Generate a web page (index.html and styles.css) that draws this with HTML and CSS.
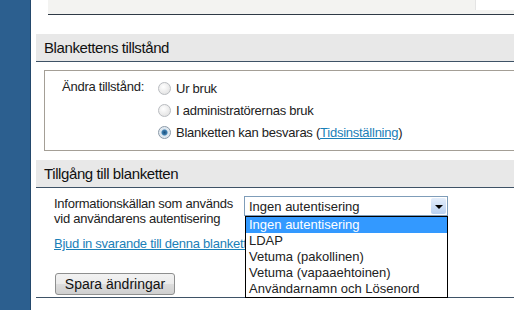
FILE: index.html
```html
<!DOCTYPE html>
<html lang="sv">
<head>
  <meta charset="UTF-8" />
  <title>Blankettens inställningar</title>
  <link rel="stylesheet" href="styles.css">
</head>
<body>
  <div class="sidebar"></div>
  <div class="main">
    <div class="top-box">
      <span class="top-input"></span>
      <span class="top-button"></span>
    </div>

    <div class="section-head">Blankettens tillstånd</div>
    <div class="state-box">
      <div class="state-label">Ändra tillstånd:</div>
      <div class="state-options">
        <label><input type="radio" name="state" /> Ur bruk</label>
        <label><input type="radio" name="state" /> I administratörernas bruk</label>
        <label><input type="radio" name="state" checked /> Blanketten kan besvaras (<a href="#">Tidsinställning</a>)</label>
      </div>
    </div>

    <div class="section-head section-head-tight">Tillgång till blanketten</div>
    <div class="access">
      <div class="access-row">
        <div class="access-label">Informationskällan som används<br />vid användarens autentisering</div>
        <div class="select-wrap">
          <div class="select">
            <span>Ingen autentisering</span>
            <span class="select-arrow"></span>
          </div>
          <ul class="select-list">
            <li class="active">Ingen autentisering</li>
            <li>LDAP</li>
            <li>Vetuma (pakollinen)</li>
            <li>Vetuma (vapaaehtoinen)</li>
            <li>Användarnamn och Lösenord</li>
          </ul>
        </div>
      </div>
      <a class="invite" href="#">Bjud in svarande till denna blankett</a>
      <button class="save">Spara ändringar</button>
    </div>
  </div>
</body>
</html>
```

FILE: styles.css
```css
body {
  margin: 0;
  display: flex;
  height: 310px;
  overflow: hidden;
  font-family: "Liberation Sans", Arial, sans-serif;
  font-size: 13px;
  letter-spacing: -0.25px;
  color: #222;
  background: #fff;
}
.sidebar {
  width: 30px;
  flex-shrink: 0;
  background: #2c5f8f;
  border-right: 1px solid #24496c;
}
.main {
  margin-left: 5px;
  width: 500px;
  flex-shrink: 0;
}
.top-box {
  margin-left: 12px;
  height: 14px;
  background: #f3f3f1;
  border-bottom: 1px solid #2f3a46;
  display: flex;
  justify-content: flex-end;
  gap: 3px;
}
.top-input {
  width: 51px;
  height: 10px;
  background: #fff;
  border-left: 1px solid #e4e4e4;
  border-right: 1px solid #d6d6d6;
}
.top-button {
  width: 4px;
  height: 11px;
  border-left: 1px solid #8a8a8a;
}
.section-head {
  margin-top: 19px;
  height: 27px;
  line-height: 27px;
  padding-left: 8px;
  font-size: 15px;
  letter-spacing: -0.4px;
  color: #111;
  background: #e8e8e8;
  border-bottom: 1px solid #3e5266;
}
.section-head-tight {
  margin-top: 9px;
}
.state-box {
  margin: 8px 0 0 8px;
  height: 79px;
  border: 1px solid #a49f96;
  display: flex;
  padding-left: 17px;
}
.state-label {
  margin-top: 8px;
  width: 96px;
}
.state-options {
  margin-top: 6px;
}
.state-options label {
  display: flex;
  align-items: center;
  height: 22px;
}
.state-options input {
  appearance: none;
  width: 13px;
  height: 13px;
  margin: 0 5px 0 0;
  border-radius: 50%;
  border: 1px solid #b9bcc0;
  background: radial-gradient(circle at 40% 35%, #ffffff, #dcdcdc);
}
.state-options input:checked {
  border-color: #8b9aa8;
  background: radial-gradient(circle, #1d4f7c 0, #3d7fb0 2.5px, #d9e4ee 3.5px, #f4f6f8 100%);
}
a {
  color: #1a80b8;
}
.access {
  padding-left: 18px;
  border-bottom: 1px solid #3e5266;
  padding-bottom: 2px;
}
.access-row {
  display: flex;
  padding-top: 8px;
}
.access-label {
  width: 190px;
  line-height: 15px;
}
.select-wrap {
  position: relative;
}
.select {
  width: 198px;
  height: 18px;
  border: 1px solid #7f9db9;
  display: flex;
  align-items: center;
  justify-content: space-between;
  padding-left: 4px;
  font-size: 13px;
  letter-spacing: 0;
}
.select-arrow {
  width: 15px;
  height: 16px;
  margin-right: 1px;
  border-radius: 2px;
  background: linear-gradient(#e4eefb, #b9d1f1);
  position: relative;
}
.select-arrow::after {
  content: "";
  position: absolute;
  left: 4px;
  top: 7px;
  border-left: 4px solid transparent;
  border-right: 4px solid transparent;
  border-top: 4px solid #000;
}
.select-list {
  position: absolute;
  left: 1px;
  top: 20px;
  width: 201px;
  margin: 0;
  padding: 0;
  list-style: none;
  background: #fff;
  border: 1px solid #000;
  font-size: 13px;
  letter-spacing: 0;
}
.select-list li {
  height: 16px;
  line-height: 16px;
  padding-left: 3px;
}
.select-list li.active {
  background: #3399ff;
  color: #fff;
}
.invite {
  display: block;
  margin-top: 10px;
}
.save {
  margin: 22px 0 0 1px;
  width: 120px;
  height: 22px;
  font-family: inherit;
  font-size: 14px;
  letter-spacing: 0;
  color: #111;
  border: 1px solid #8e8f8f;
  border-radius: 3px;
  background: linear-gradient(#f2f2f2 0, #ebebeb 50%, #dddddd 51%, #cfcfcf 100%);
}
```
